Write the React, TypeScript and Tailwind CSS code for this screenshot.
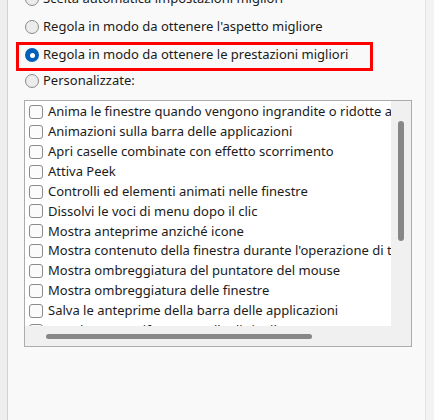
import type React from 'react'

const items = [
  'Anima le finestre quando vengono ingrandite o ridotte ad icona',
  'Animazioni sulla barra delle applicazioni',
  'Apri caselle combinate con effetto scorrimento',
  'Attiva Peek',
  'Controlli ed elementi animati nelle finestre',
  'Dissolvi le voci di menu dopo il clic',
  'Mostra anteprime anziché icone',
  "Mostra contenuto della finestra durante l'operazione di trascinamento",
  'Mostra ombreggiatura del puntatore del mouse',
  'Mostra ombreggiatura delle finestre',
  'Salva le anteprime della barra delle applicazioni',
  'Scorrimento uniforme caselle di riepilogo',
]

const Radio: React.FC<{checked?: boolean}> = ({checked}) =>
  checked ? (
    <span className="w-[14px] h-[14px] rounded-full bg-[#005fb8] flex items-center justify-center shrink-0">
      <span className="w-[5px] h-[5px] rounded-full bg-white" />
    </span>
  ) : (
    <span className="w-[14px] h-[14px] rounded-full border border-[#8a8a8a] bg-[#ececec] shrink-0" />
  )

const App: React.FC = () => {
  const radios = [
    {label: 'Scelta automatica impostazioni migliori', h: 'h-[28px] mt-[-15px]'},
    {label: "Regola in modo da ottenere l'aspetto migliore", h: 'h-[28px]'},
    {label: 'Regola in modo da ottenere le prestazioni migliori', h: 'h-[28px]', checked: true},
    {label: 'Personalizzate:', h: 'h-[23px]'},
  ]

  return (
    <div
      className="w-[434px] h-[420px] flex bg-[#f9f9f9] overflow-hidden text-[13px] text-[#1b1b1b]"
      style={{fontFamily: '"Noto Sans", "Open Sans", sans-serif'}}>
      {/* bordo sinistro */}
      <div className="w-[8px] shrink-0 bg-[#eeeeee] border-r border-[#d2d2d2]" />

      <div className="flex-1 relative flex flex-col">
        {radios.map((r) => (
          <div key={r.label} className={`${r.h} flex items-center pl-[17px] gap-[4px] whitespace-nowrap`}>
            <Radio checked={r.checked} />
            <span>{r.label}</span>
          </div>
        ))}

        {/* evidenziazione */}
        <div className="absolute left-[8px] top-[42px] w-[357px] h-[29px] border-[3px] border-[#ff0000]" />

        {/* elenco effetti */}
        <div className="ml-[16px] mt-[8px] w-[388px] h-[247px] border border-[#acacac] bg-[#f0f0f0] flex flex-col">
          <div className="flex h-[225px]">
            <div className="flex-1 bg-white overflow-hidden pt-[1px] pl-[4px]">
              {items.map((t) => (
                <div key={t} className="h-[19.9px] flex items-center gap-[5px] whitespace-nowrap">
                  <span className="w-[14px] h-[14px] rounded-[3px] border border-[#8b8b8b] bg-[#fbfbfb] shrink-0" />
                  <span>{t}</span>
                </div>
              ))}
            </div>
            <div className="w-[20px] shrink-0 pt-[20px] pl-[7px]">
              <div className="w-[6px] h-[120px] rounded-full bg-[#878787]" />
            </div>
          </div>
          <div className="h-[20px] pt-[8px] pl-[21px]">
            <div className="w-[266px] h-[5px] rounded-full bg-[#878787]" />
          </div>
        </div>
      </div>

      {/* bordo destro */}
      <div className="w-[9px] shrink-0 bg-[#f3f3f3] border-l border-[#e2e2e2]" />
    </div>
  )
}

export default App
